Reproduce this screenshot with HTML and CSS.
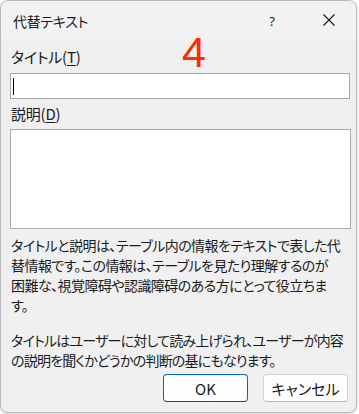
FILE: index.html
```html
<!DOCTYPE html>
<html lang="ja">
<head>
<meta charset="utf-8">
<link rel="stylesheet" href="styles.css">
</head>
<body>
<div class="dialog">
  <div class="titlebar">
    <span class="title">代替テキスト</span>
    <span class="help">?</span>
    <svg class="close" width="12" height="12" viewBox="0 0 12 12"><path d="M0.5 0.5L11.5 11.5M11.5 0.5L0.5 11.5" stroke="#1a1a1a" stroke-width="1.1" fill="none"/></svg>
  </div>
  <div class="content">
    <div class="label">タイトル(<u>T</u>)</div>
    <div class="input"><span class="caret"></span></div>
    <div class="label label2">説明(<u>D</u>)</div>
    <div class="textarea"></div>
    <p class="para para1">タイトルと説明は、テーブル内の情報をテキストで表した代<br>替情報です。この情報は、テーブルを見たり理解するのが<br>困難な、視覚障碍や認識障碍のある方にとって役立ちま<br>す。</p>
    <p class="para para2">タイトルはユーザーに対して読み上げられ、ユーザーが内容<br>の説明を聞くかどうかの判断の基にもなります。</p>
    <div class="buttons">
      <button class="btn primary">OK</button>
      <button class="btn">キャンセル</button>
    </div>
  </div>
  <div class="marker">4</div>
</div>
</body>
</html>
```
FILE: styles.css
```css
html, body {
  margin: 0;
  padding: 0;
  background: #ffffff;
  width: 359px;
  height: 414px;
  overflow: hidden;
}
.dialog {
  position: relative;
  box-sizing: border-box;
  width: 357px;
  height: 413px;
  background: #f0f0f0;
  border: 1px solid #b9b9b9;
  border-radius: 8px;
  box-shadow: 0 1px 3px rgba(0,0,0,0.18);
  font-family: "Noto Sans CJK JP", "Noto Sans", sans-serif;
  font-feature-settings: "palt";
  color: #1b1b1b;
  overflow: hidden;
}
.titlebar {
  height: 37px;
  background: #f3f2f3;
  display: flex;
  align-items: center;
  padding-left: 12px;
  padding-right: 21px;
}
.title {
  font-size: 14px;
  letter-spacing: -0.3px;
  flex: 1;
  margin-top: 2px;
}
.help {
  font-family: "Noto Sans", sans-serif;
  font-size: 13px;
  margin-right: 48px;
  margin-top: 2px;
}
.close {
  display: block;
  margin-top: 1px;
}
.content {
  padding: 9px 8px 0 9px;
}
.label {
  font-size: 15px;
  line-height: 20px;
  padding-left: 1px;
  letter-spacing: -0.2px;
}
.label u {
  text-underline-offset: 2px;
}
.input {
  margin-top: 6px;
  height: 26px;
  box-sizing: border-box;
  background: #ffffff;
  border: 1px solid #a9a9a9;
  width: 340px;
  position: relative;
  display: flex;
  align-items: center;
  padding-left: 2px;
}
.caret {
  display: block;
  width: 1px;
  height: 17px;
  background: #000;
}
.label2 {
  margin-top: 5px;
}
.textarea {
  margin-top: 5px;
  height: 100px;
  box-sizing: border-box;
  background: #ffffff;
  border: 1px solid #a9a9a9;
  width: 341px;
}
.para {
  margin: 0;
  font-size: 14px;
  line-height: 20px;
  white-space: nowrap;
  padding-left: 1px;
}
.para1 {
  margin-top: 6px;
  letter-spacing: -0.55px;
}
.para2 {
  margin-top: 15px;
  letter-spacing: -0.8px;
}
.buttons {
  display: flex;
  justify-content: flex-end;
  gap: 15px;
  margin-top: 4px;
  padding-right: 0px;
}
.btn {
  width: 85px;
  height: 28px;
  box-sizing: border-box;
  border-radius: 4px;
  background: #fdfdfd;
  border: 1px solid #d3d3d3;
  border-bottom-color: #b8b8b8;
  font-family: "Noto Sans CJK JP", "Noto Sans", sans-serif;
  font-feature-settings: "palt";
  font-size: 15px;
  color: #1b1b1b;
  padding: 0;
}
.btn.primary {
  border: 1px solid #0067c0;
  border-bottom-color: #00509a;
}
.marker {
  position: absolute;
  left: 181px;
  top: 30px;
  font-family: "Liberation Sans", Arial, sans-serif;
  font-size: 43px;
  line-height: 1;
  color: #ff2a00;
}
```
